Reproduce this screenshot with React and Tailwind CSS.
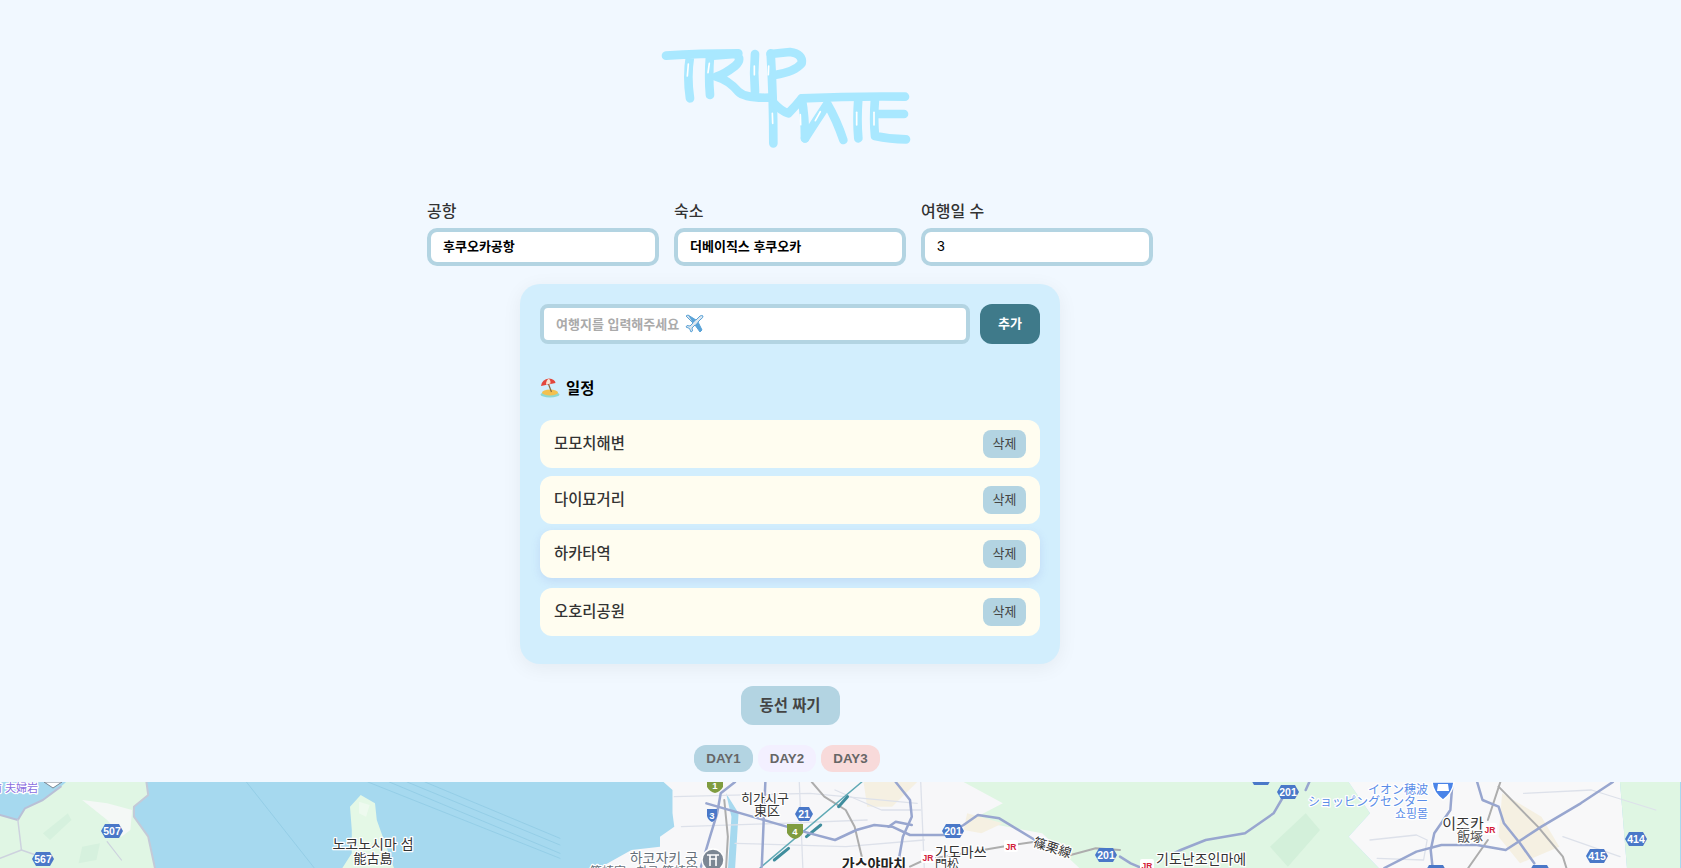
import React from 'react';

const FONT = 'font-["Liberation_Sans","Noto_Sans_CJK_KR",sans-serif]';

// map coords are read off 2.8x/3x crops, so convert them here
const pts = (ox, arr) => arr.map(([x, y]) => `${ox + x / 2.8},${y / 3 - 12}`).join(' ');

const Land = ({ ox, p, fill }) => <polygon points={pts(ox, p)} fill={fill} />;
const Road = ({ ox, p, c = '#98a6cf', w = 2.5 }) => (
    <polyline points={pts(ox, p)} fill="none" stroke={c} strokeWidth={w} strokeLinejoin="round" strokeLinecap="round" />
);

const Shield = ({ x, y, n, w = 22 }) => (
    <g>
        <polygon points={`${x - w / 2},${y} ${x - w / 2 + 4},${y - 7} ${x + w / 2 - 4},${y - 7} ${x + w / 2},${y} ${x + w / 2 - 4},${y + 7} ${x - w / 2 + 4},${y + 7}`} fill="#4a78c8" />
        <text x={x} y={y + 4} textAnchor="middle" fontSize="10.5" fontWeight="700" fill="#fff">{n}</text>
    </g>
);

const Green = ({ x, y, n }) => (
    <g>
        <path d={`M${x - 8},${y - 6} H${x + 8} V${y + 3} Q${x + 5},${y + 8} ${x},${y + 9} Q${x - 5},${y + 8} ${x - 8},${y + 3} Z`} fill="#7f9c3f" />
        <text x={x} y={y + 5} textAnchor="middle" fontSize="9.5" fontWeight="700" fill="#fff">{n}</text>
    </g>
);

const Jr = ({ x, y }) => (
    <g>
        <rect x={x - 7} y={y - 6} width="14" height="12" rx="2" fill="#fff" />
        <text x={x} y={y + 3.5} textAnchor="middle" fontSize="8.5" fontWeight="700" fill="#d3203a">JR</text>
    </g>
);

const Label = ({ x, y, size = 13, anchor = 'middle', fill = '#333', weight = 400, children, rotate }) => (
    <text
        x={x}
        y={y}
        textAnchor={anchor}
        fontSize={size}
        fontWeight={weight}
        fill={fill}
        stroke="#fff"
        strokeWidth="2.5"
        paintOrder="stroke"
        strokeLinejoin="round"
        transform={rotate ? `rotate(${rotate} ${x} ${y})` : undefined}
    >
        {children}
    </text>
);

const MapView = () => (
    <div className="h-[86px] w-full overflow-hidden bg-[#a6d9ef]">
        <svg width="1681" height="86" viewBox="0 0 1681 86" fontFamily="'Liberation Sans','Noto Sans CJK KR',sans-serif">
            {/* west peninsula */}
            <Land ox={0} fill="#e0f6e4" p={[[0, 135], [50, 150], [70, 115], [120, 90], [170, 50], [185, 36], [410, 36], [415, 75], [375, 110], [375, 140], [415, 200], [435, 300], [0, 300]]} />
            <Land ox={0} fill="#f4f8f6" p={[[230, 90], [300, 100], [370, 120], [365, 180], [340, 200], [300, 150]]} />
            <Land ox={0} fill="#d6f1de" p={[[120, 190], [190, 130], [200, 150], [140, 210]]} />
            <Land ox={0} fill="#d6f1de" p={[[230, 230], [280, 220], [270, 270], [220, 280]]} />
            <Road ox={0} c="#b9c0d6" w={2} p={[[0, 135], [50, 150], [70, 115], [120, 90], [170, 50]]} />
            <Road ox={0} c="#cdd2de" w={1.5} p={[[50, 150], [60, 240], [0, 265]]} />
            <Road ox={0} c="#cdd2de" w={1.5} p={[[60, 240], [140, 270]]} />
            <Road ox={0} c="#cdd2de" w={1.2} p={[[300, 215], [340, 270]]} />
            <Road ox={0} c="#c4cad8" w={2} p={[[410, 36], [415, 75], [375, 110], [375, 140], [415, 200], [435, 300]]} />
            {/* island */}
            <Land ox={0} fill="#e4f8e6" p={[[1010, 75], [1050, 100], [1055, 150], [1075, 210], [1105, 300], [955, 300], [985, 250], [985, 180], [980, 110]]} />
            <Land ox={0} fill="#eefaef" p={[[1005, 95], [1035, 105], [1025, 140], [1005, 130]]} />
            {/* ferry lines */}
            <Road ox={0} c="#8cc8e2" w={0.7} p={[[690, 36], [880, 294]]} />
            <Road ox={0} c="#8cc8e2" w={0.7} p={[[1030, 36], [1568, 265]]} />
            <Road ox={0} c="#8cc8e2" w={0.7} p={[[1090, 36], [1568, 250]]} />
            <Road ox={0} c="#8cc8e2" w={0.7} p={[[1140, 36], [1568, 225]]} />
            <Road ox={0} c="#8cc8e2" w={0.7} p={[[1190, 36], [1568, 205]]} />
            {/* city land */}
            <Land ox={560} fill="#f7f7f9" p={[[290, 36], [315, 60], [315, 130], [320, 170], [280, 200], [280, 230], [200, 240], [100, 300], [1568, 300], [1568, 36]]} />
            <Land ox={560} fill="#dff6e3" p={[[1130, 36], [1568, 36], [1568, 300], [1460, 300], [1350, 190], [1150, 150], [1240, 100]]} />
            <Land ox={560} fill="#f5f0e2" p={[[850, 36], [1000, 36], [930, 110], [860, 110]]} />
            <Land ox={560} fill="#f5f0e2" p={[[1140, 130], [1240, 160], [1180, 190], [1130, 180]]} />
            <Land ox={560} fill="#a6d9ef" p={[[465, 70], [500, 130], [490, 300], [470, 300], [480, 140]]} />
            <Land ox={1120} fill="#dff6e3" p={[[0, 36], [640, 36], [700, 130], [640, 200], [730, 300], [0, 300]]} />
            <Land ox={1120} fill="#d3f0da" p={[[420, 230], [520, 130], [560, 180], [470, 290]]} />
            <Land ox={1120} fill="#f8f8f9" p={[[640, 36], [1400, 36], [1420, 300], [730, 300], [640, 200], [700, 130]]} />
            <Land ox={1120} fill="#f5f0e2" p={[[1070, 70], [1180, 140], [1230, 230], [1120, 280], [1060, 200]]} />
            <Land ox={1120} fill="#dff6e3" p={[[1400, 36], [1568, 36], [1568, 300], [1420, 300]]} />
            {/* small roads */}
            {[
                [[320, 80], [700, 70], [1000, 100]],
                [[340, 170], [620, 160], [860, 150]],
                [[490, 220], [800, 230], [1020, 210]],
                [[670, 36], [680, 294]],
                [[1010, 36], [1020, 294]],
                [[770, 60], [900, 120], [1010, 120]],
            ].map((p, i) => <Road key={i} ox={560} p={p} c="#dde1ea" w={1.3} />)}
            {[
                [[700, 210], [830, 195], [860, 210], [850, 270], [720, 265]],
                [[1130, 70], [1320, 60], [1500, 120]],
                [[1240, 200], [1400, 260]],
            ].map((p, i) => <Road key={i} ox={1120} p={p} c="#dde1ea" w={1.3} />)}
            {/* rail */}
            <Road ox={560} c="#adadad" w={2} p={[[705, 36], [740, 80], [800, 120], [825, 170], [845, 260]]} />
            <Road ox={560} c="#adadad" w={2} p={[[460, 90], [470, 200], [465, 294]]} />
            <Road ox={560} c="#adadad" w={2} p={[[980, 290], [1020, 270], [1250, 228], [1330, 215], [1430, 255], [1500, 235], [1568, 240]]} />
            <Road ox={560} c="#5fa9b5" w={1.5} p={[[845, 36], [560, 294]]} />
            <Road ox={560} c="#3f8d9d" w={3} p={[[780, 110], [805, 80]]} />
            <Road ox={560} c="#3f8d9d" w={3} p={[[600, 270], [640, 235]]} />
            <Road ox={560} c="#3f8d9d" w={3} p={[[690, 200], [730, 165]]} />
            <Road ox={1120} c="#adadad" w={2} p={[[1065, 36], [1030, 150]]} />
            <Road ox={1120} c="#adadad" w={2} p={[[1060, 50], [1170, 170], [1240, 260], [1250, 294]]} />
            <Road ox={1120} c="#adadad" w={2} p={[[1030, 210], [975, 294]]} />
            {/* highways */}
            <Road ox={560} p={[[410, 100], [700, 190], [770, 210], [830, 180], [880, 165], [930, 170], [980, 195], [1080, 195], [1130, 165], [1170, 135], [1230, 145], [1330, 210]]} />
            <Road ox={560} p={[[490, 36], [450, 70], [440, 130], [420, 200], [395, 290]]} />
            <Road ox={560} p={[[575, 36], [570, 160], [565, 290]]} />
            <Road ox={560} p={[[940, 36], [980, 90], [985, 140], [960, 200], [945, 290]]} />
            <Road ox={560} p={[[920, 170], [940, 155], [985, 165]]} />
            <Road ox={1120} p={[[530, 36], [520, 60]]} />
            <Road ox={1120} p={[[460, 75], [430, 130], [350, 190], [240, 210], [170, 240], [150, 250]]} />
            <Road ox={1120} p={[[0, 260], [30, 280], [60, 294]]} />
            <Road ox={1120} p={[[930, 50], [925, 120], [880, 190], [870, 240], [875, 290]]} />
            <Road ox={1120} p={[[740, 294], [830, 245], [900, 225], [1000, 225], [1080, 240], [1180, 170], [1290, 100], [1380, 36]]} />
            <Road ox={1120} p={[[1000, 36], [1015, 90], [1060, 110], [1075, 160], [1120, 220], [1160, 280]]} />
            {/* shields */}
            <Shield x={112} y={49} n="507" />
            <Shield x={43} y={77} n="567" />
            <Shield x={804} y={32} n="21" w={18} />
            <Shield x={953} y={49} n="201" />
            <Shield x={1106} y={73} n="201" />
            <Shield x={1288} y={10} n="201" />
            <Shield x={1261} y={-4} n="" />
            <Shield x={1636} y={57} n="414" />
            <Shield x={1597} y={74} n="415" />
            <Shield x={1436} y={90} n="" />
            <Shield x={1540} y={90} n="" />
            <Green x={715} y={2} n="1" />
            <Green x={795} y={48} n="4" />
            <path d="M707,27 H717 V34 Q716,38 712,40 Q708,38 707,34 Z" fill="#4a78c8" />
            <text x={712} y={37} textAnchor="middle" fontSize="9.5" fontWeight="700" fill="#fff">3</text>
            {/* labels */}
            <Label x={38} y={10} size={11} anchor="end" fill="#8a6ee0">前 夫婦岩</Label>
            <path d="M44,0 H62 L53,6 Z" fill="#fff" stroke="#7c8794" strokeWidth="1" />
            <Label x={373} y={67} size={14}>노코노시마 섬</Label>
            <Label x={373} y={81} size={13}>能古島</Label>
            <Label x={765} y={21} size={13}>히가시구</Label>
            <Label x={767} y={33} size={13}>東区</Label>
            <Label x={698} y={81} size={14} anchor="end" fill="#66707a">하코자키 궁</Label>
            <Label x={698} y={94} size={12} anchor="end" fill="#66707a">筥崎宮 · 하코 筥崎宮</Label>
            <circle cx={713} cy={78} r={11} fill="#7c8794" stroke="#fff" strokeWidth="1.5" />
            <path d="M707,73 H719 M709,77 H717 M710,73 V84 M716,73 V84" stroke="#fff" strokeWidth="1.6" fill="none" />
            <Label x={874} y={87} size={14} weight={700} fill="#222">가스야마치</Label>
            <Label x={935} y={75} size={14} anchor="start">가도마쓰</Label>
            <Label x={935} y={87} size={12} anchor="start">門松</Label>
            <Label x={1051} y={70} size={13} rotate={18}>篠栗線</Label>
            <Jr x={928} y={75} />
            <Jr x={1011} y={64} />
            <Jr x={1490} y={47} />
            <Jr x={1147} y={83} />
            <Label x={1156} y={82} size={14} anchor="start">기도난조인마에</Label>
            <Label x={1463} y={47} size={15}>이즈카</Label>
            <Label x={1470} y={59} size={13} fill="#555">飯塚</Label>
            <Label x={1428} y={12} size={12} anchor="end" fill="#5a8de8">イオン穂波</Label>
            <Label x={1428} y={24} size={12} anchor="end" fill="#5a8de8">ショッピングセンター</Label>
            <Label x={1428} y={36} size={12} anchor="end" fill="#5a8de8">쇼핑몰</Label>
            <path d="M1432,0 H1454 Q1453,11 1443,18 Q1433,11 1432,0 Z" fill="#4a84e8" stroke="#fff" strokeWidth="1.5" />
            <path d="M1438,2 H1448 L1449,9 H1437 Z" fill="#fff" />
        </svg>
    </div>
);

const Logo = () => (
    <svg width="290" height="130" viewBox="15 0 870 390">
        <g fill="none" stroke="#a9e8ff" strokeWidth="26" strokeLinecap="round" strokeLinejoin="round">
            <path d="M78,77 Q180,70 295,70 M150,80 Q140,140 150,205" />
            <path d="M210,78 Q205,140 210,195" />
            <path d="M210,78 L285,72 Q310,85 285,108 Q250,135 228,140 Q265,150 295,185 Q315,205 388,203" />
            <path d="M345,72 Q340,130 345,186" />
            <path d="M392,70 Q400,200 400,340" />
            <path d="M392,72 L450,66 Q490,72 485,100 Q465,125 404,135" />
            <path d="M400,218 Q425,245 445,250 Q465,230 485,205 Q495,260 495,325" />
            <path d="M495,325 Q530,270 562,222 Q590,270 610,330" />
            <path d="M485,205 Q640,198 795,200" />
            <path d="M655,205 Q650,270 655,325" />
            <path d="M705,205 Q700,270 705,318 Q750,328 798,328" />
            <path d="M710,252 L792,252" />
        </g>
        <g fill="none" stroke="#fff" strokeWidth="5" strokeLinecap="round">
            <path d="M145,102 L142,138" />
            <path d="M208,100 L204,128" />
            <path d="M343,108 L343,134" />
            <path d="M386,108 L385,134" />
            <path d="M397,250 L398,280" />
            <path d="M481,254 L482,284" />
            <path d="M541,245 L526,272" />
            <path d="M650,247 L650,285" />
            <path d="M702,247 L702,285" />
        </g>
    </svg>
);

const PlaneIcon = () => (
    <svg width="19" height="19" viewBox="0 0 19 19" className="absolute left-[145px] top-[10px]">
        <path d="M1,2 L3,1 L11,6 L15,2 Q17,1 18,2 Q18,4 16,5 L13,8 L17,16 L15,18 L10,11 L7,14 L7.5,17 L6,18 L4.5,14.5 L1,13 L2,11.5 L5,12 L8,9 Z" fill="#dfe7ee" stroke="#5aa3d8" strokeWidth="1" strokeLinejoin="round" />
        <path d="M3,1 L11,6 L8,9 Z M13,8 L17,16 L15,18 L10,11 Z" fill="#5aa3d8" />
    </svg>
);

const BeachIcon = () => (
    <svg width="20" height="20" viewBox="0 0 20 20" className="-mt-[3px]">
        <ellipse cx="10" cy="16.5" rx="9.5" ry="3" fill="#8fd8d0" />
        <ellipse cx="10" cy="14.5" rx="8" ry="3" fill="#f3c14f" />
        <path d="M7,2 L11.5,14" stroke="#8a6a3c" strokeWidth="1.2" />
        <path d="M1,8 Q2,1 9,0.5 Q15,1 15.5,5 Z" fill="#e2463c" />
        <path d="M6,6.7 Q6,2 9,0.5 Q11,3 10.5,5.6 Z" fill="#f6e3d4" />
    </svg>
);

const Field = ({ label, value, number }) => (
    <div className="w-[232px]">
        <label className="block h-6 mb-[5px] text-base font-medium leading-[26px] text-[#333]">{label}</label>
        <input
            defaultValue={value}
            className={`block w-full h-[38px] px-[12px] pb-[3px] border-4 border-[#b3d4e2] rounded-[10px] bg-white text-black outline-none ${number ? 'text-sm font-normal' : 'text-[13px] font-bold'}`}
        />
    </div>
);

const places = [
    { name: '모모치해변', gap: 'mb-2' },
    { name: '다이묘거리', gap: 'mb-[6px]' },
    { name: '하카타역', gap: 'mb-[10px] shadow-[0_3px_10px_rgba(120,140,220,0.2)]' },
    { name: '오호리공원', gap: '' },
];

const days = [
    { label: 'DAY1', cls: 'bg-[#b3d4e2] w-[59px]' },
    { label: 'DAY2', cls: 'bg-[#f3f0ff] w-[58px]' },
    { label: 'DAY3', cls: 'bg-[#f8dada] w-[59px]' },
];

export default function App() {
    return (
        <div className={`h-[868px] overflow-hidden bg-[#f1f8ff] ${FONT}`}>
            <div className="w-[1580px] flex flex-col items-center pt-[30px]">
                <Logo />

                <div className="mt-[39px] flex gap-[15px]">
                    <Field label="공항" value="후쿠오카공항" />
                    <Field label="숙소" value="더베이직스 후쿠오카" />
                    <Field label="여행일 수" value="3" number />
                </div>

                <div className="mt-[18px] w-[540px] px-5 pt-5 pb-7 rounded-[20px] bg-[#d2eefd] shadow-[0_4px_20px_rgba(0,0,0,0.06)]">
                    <div className="flex gap-[10px]">
                        <div className="relative flex-1">
                            <input
                                placeholder="여행지를 입력해주세요"
                                className="block w-full h-10 px-[12px] border-4 border-[#b3d4e2] rounded-[8px] bg-white text-[13px] font-bold placeholder:text-[#aaa] outline-none"
                            />
                            <PlaneIcon />
                        </div>
                        <button className="w-[60px] h-10 rounded-xl bg-[#3f7a8a] text-white text-[13px] font-bold">추가</button>
                    </div>

                    <h2 className="mt-[33px] mb-[19px] flex items-center gap-[6px] h-6 text-[15.4px] font-bold text-black">
                        <BeachIcon />
                        일정
                    </h2>

                    {places.map((p) => (
                        <div key={p.name} className={`flex items-center justify-between h-12 px-[14px] rounded-[12px] bg-[#fffdf0] ${p.gap}`}>
                            <span className="text-[15.4px] font-medium text-[#333] -mt-[1px]">{p.name}</span>
                            <button className="w-[43px] h-7 rounded-lg bg-[#b3d4e2] text-[13px] text-[#444]">삭제</button>
                        </div>
                    ))}
                </div>

                <button className="mt-[22px] w-[99px] h-[39px] rounded-xl bg-[#b3d4e2] text-[15.4px] font-bold text-[#444]">동선 짜기</button>

                <div className="mt-5 mr-[6px] flex gap-[5px]">
                    {days.map((d) => (
                        <button key={d.label} className={`h-[27px] rounded-xl text-[13.33px] font-bold text-[#666] ${d.cls}`}>{d.label}</button>
                    ))}
                </div>
            </div>

            <div className="mt-[10px]">
                <MapView />
            </div>
        </div>
    );
}
